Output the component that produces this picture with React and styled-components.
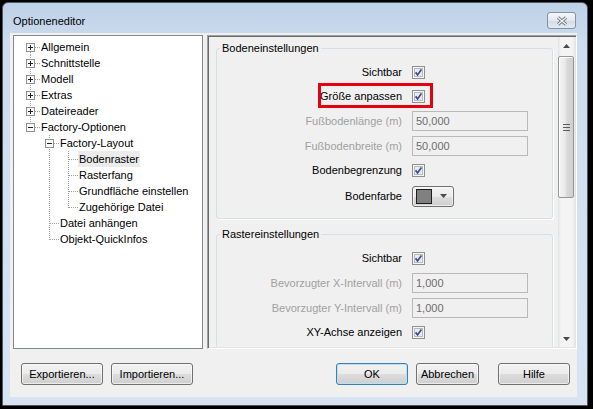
import styled, { createGlobalStyle } from "styled-components";

const GlobalStyle = createGlobalStyle`
  html, body {
    margin: 0;
    background: #000;
  }
  body {
    font-family: "Liberation Sans", Arial, sans-serif;
    font-size: 11px;
    color: #000;
  }
`;

const Screen = styled.div`
  width: 593px;
  height: 409px;
  box-sizing: border-box;
  padding: 2px 0 0 2px;
`;

const Window = styled.div`
  width: 586px;
  height: 404px;
  box-sizing: border-box;
  border: 1px solid #4b5866;
  border-radius: 6px 6px 0 0;
  background: linear-gradient(#bed1e7, #cddcee 40px, #d8e4f2);
  display: flex;
  flex-direction: column;
`;

const TitleBar = styled.div`
  height: 30px;
  flex: none;
  display: flex;
  align-items: flex-start;
  padding: 0 11px 0 10px;
`;

const Title = styled.span`
  margin-top: 11px;
  line-height: 14px;
`;

const CloseButton = styled.div`
  margin-left: auto;
  margin-top: 9px;
  width: 29px;
  height: 17px;
  box-sizing: border-box;
  border: 1px solid #8391a3;
  border-radius: 3px;
  background: linear-gradient(#f4f7fb, #e1e8f0 50%, #d3dce7 51%, #e3eaf2);
  display: flex;
  align-items: center;
  justify-content: center;
`;

const Client = styled.div`
  flex: 1;
  margin: 0 10px 8px 7px;
  background: #f0f0f0;
  display: flex;
  flex-direction: column;
  padding: 2px 0 0 3px;
`;

const Panels = styled.div`
  height: 314px;
  display: flex;
  gap: 4px;
`;

const TreeBox = styled.div`
  width: 190px;
  box-sizing: border-box;
  border: 1px solid #828790;
  background: #fff;
  padding: 3px 0 0 7px;
`;

const TreeRow = styled.div`
  display: flex;
  height: 16px;
  align-items: center;
`;

const GuideSvg = styled.svg`
  display: block;
  flex: none;
`;

const TreeLabel = styled.span`
  padding: 0 1px;
  line-height: 16px;
  white-space: nowrap;
  background: ${({ $selected }) => ($selected ? "#ebebeb" : "transparent")};
`;

const SettingsPanel = styled.div`
  flex: 1;
  display: flex;
  border: 1px solid;
  border-color: #a0a0a0 #fff #fff #a0a0a0;
  box-shadow: inset 1px 1px 0 #696969, inset -1px -1px 0 #e3e3e3;
  padding: 1px;
  min-width: 0;
`;

const SettingsContent = styled.div`
  flex: 1;
  overflow: hidden;
  padding: 4px 5px 0 7px;
  background: #f0f0f0;
`;

const Group = styled.fieldset`
  margin: ${({ $first }) => ($first ? "0" : "8px 0 0")};
  padding: 4px 0 8px 0;
  min-width: 0;
  border: 1px solid #d5dfe5;
  border-radius: 3px;
  box-shadow: 1px 1px 0 #fff;
`;

const GroupTitle = styled.legend`
  margin-left: 3px;
  padding: 0 2px;
  line-height: 15px;
`;

const Row = styled.div`
  position: relative;
  display: grid;
  grid-template-columns: 185px auto;
  column-gap: 10px;
  align-items: center;
  justify-items: start;
  height: ${({ $h }) => $h}px;
`;

const Label = styled.span`
  justify-self: end;
  white-space: nowrap;
  color: ${({ $disabled }) => ($disabled ? "#a0a0a0" : "#000")};
`;

const Highlight = styled.div`
  position: absolute;
  left: 101px;
  top: -1px;
  width: 115px;
  height: 25px;
  box-sizing: border-box;
  border: 3px solid #e4000f;
  pointer-events: none;
`;

const TextBox = styled.div`
  width: 116px;
  height: 20px;
  box-sizing: border-box;
  border: 1px solid #b9b9b9;
  background: #f0f0f0;
  color: #6d6d6d;
  padding-left: 3px;
  line-height: 18px;
`;

const ColorPicker = styled.div`
  width: 42px;
  height: 21px;
  box-sizing: border-box;
  border: 1px solid #707070;
  border-radius: 3px;
  background: linear-gradient(#f2f2f2, #ebebeb 50%, #dddddd 51%, #cfcfcf);
  box-shadow: inset 0 0 0 1px rgba(255, 255, 255, 0.6);
  display: flex;
  align-items: center;
  padding-left: 3px;
  gap: 8px;
`;

const Swatch = styled.div`
  width: 16px;
  height: 15px;
  box-sizing: border-box;
  border: 1px solid #1e1e1e;
  background: ${({ $color }) => $color};
`;

const ScrollBar = styled.div`
  width: 17px;
  flex: none;
  display: flex;
  flex-direction: column;
  background: linear-gradient(90deg, #e2e2e2, #f4f4f4 3px, #f4f4f4 14px, #e8e8e8);
`;

const ScrollArrow = styled.div`
  height: 17px;
  flex: none;
  display: flex;
  align-items: center;
  justify-content: center;
`;

const Thumb = styled.div`
  margin: 2px 1px 0 0;
  height: 142px;
  flex: none;
  box-sizing: border-box;
  border: 1px solid #979797;
  border-radius: 2px;
  background: linear-gradient(90deg, #f4f4f4, #e9e9e9 45%, #dadada 55%, #cfcfcf);
  box-shadow: inset 1px 1px 0 #fff;
  display: flex;
  align-items: center;
  justify-content: center;
`;

const ScrollSpacer = styled.div`
  flex: 1;
`;

const ButtonBar = styled.div`
  margin-top: 14px;
  display: flex;
  align-items: center;
  padding: 0 7px 0 8px;
`;

const Button = styled.div`
  width: ${({ $w }) => $w}px;
  height: 22px;
  box-sizing: border-box;
  margin-left: ${({ $ml }) => $ml || 0}px;
  border: 1px solid ${({ $default }) => ($default ? "#3c7fb1" : "#707070")};
  border-radius: 3px;
  background: linear-gradient(#f2f2f2, #ebebeb 50%, #dddddd 51%, #cfcfcf);
  box-shadow: inset 0 0 0 1px
    ${({ $default }) => ($default ? "#b9e0f5" : "rgba(255, 255, 255, 0.6)")};
  display: flex;
  align-items: center;
  justify-content: center;
  line-height: 14px;
`;

const Spacer = styled.div`
  flex: 1;
`;

function Guide({ v, h, box }) {
  return (
    <GuideSvg width="19" height="16" viewBox="0 0 19 16">
      {v && (
        <line
          x1="9.5"
          x2="9.5"
          y1={v === "bottom" ? 9 : 0}
          y2={v === "top" ? 9 : 16}
          stroke="#a0a0a0"
          strokeDasharray="1 1"
        />
      )}
      {h && (
        <line x1={box ? 14 : 10} x2="19" y1="8.5" y2="8.5" stroke="#a0a0a0" strokeDasharray="1 1" />
      )}
      {box && (
        <g>
          <rect x="5.5" y="4.5" width="8" height="8" fill="#f9f9f9" stroke="#919191" />
          <line x1="7" x2="12" y1="8.5" y2="8.5" stroke="#222" />
          {box === "plus" && <line x1="9.5" x2="9.5" y1="6" y2="11" stroke="#222" />}
        </g>
      )}
    </GuideSvg>
  );
}

function CheckBox() {
  return (
    <svg width="13" height="13" viewBox="0 0 13 13" style={{ display: "block" }}>
      <rect x="0.5" y="0.5" width="12" height="12" fill="#f6f6f6" stroke="#8e8f8f" />
      <rect x="2.5" y="2.5" width="8" height="8" fill="#e9ebee" stroke="#b5b9bf" />
      <path d="M3.6 6.4 L5.6 8.9 L9.4 3.6" fill="none" stroke="#3b4c95" strokeWidth="1.7" />
    </svg>
  );
}

function Arrow({ up }) {
  return (
    <svg width="7" height="4" viewBox="0 0 7 4">
      <path d={up ? "M0 4 L3.5 0 L7 4 Z" : "M0 0 L7 0 L3.5 4 Z"} fill="#4a4a4a" />
    </svg>
  );
}

const treeRows = [
  { label: "Allgemein", cells: [{ v: "bottom", h: true, box: "plus" }] },
  { label: "Schnittstelle", cells: [{ v: "full", h: true, box: "plus" }] },
  { label: "Modell", cells: [{ v: "full", h: true, box: "plus" }] },
  { label: "Extras", cells: [{ v: "full", h: true, box: "plus" }] },
  { label: "Dateireader", cells: [{ v: "full", h: true, box: "plus" }] },
  { label: "Factory-Optionen", cells: [{ v: "top", h: true, box: "minus" }] },
  { label: "Factory-Layout", cells: [{}, { v: "full", h: true, box: "minus" }] },
  { label: "Bodenraster", selected: true, cells: [{}, { v: "full" }, { v: "full", h: true }] },
  { label: "Rasterfang", cells: [{}, { v: "full" }, { v: "full", h: true }] },
  { label: "Grundfläche einstellen", cells: [{}, { v: "full" }, { v: "full", h: true }] },
  { label: "Zugehörige Datei", cells: [{}, { v: "full" }, { v: "top", h: true }] },
  { label: "Datei anhängen", cells: [{}, { v: "full", h: true }] },
  { label: "Objekt-QuickInfos", cells: [{}, { v: "top", h: true }] },
];

export default function App() {
  return (
    <Screen>
      <GlobalStyle />
      <Window>
        <TitleBar>
          <Title>Optioneneditor</Title>
          <CloseButton>
            <svg width="12" height="10" viewBox="0 0 12 10">
              <path d="M2 1.5 L10 8.5 M10 1.5 L2 8.5" stroke="#6c7580" strokeWidth="3" />
              <path d="M2 1.5 L10 8.5 M10 1.5 L2 8.5" stroke="#f7f7f7" strokeWidth="1.2" />
            </svg>
          </CloseButton>
        </TitleBar>
        <Client>
          <Panels>
            <TreeBox>
              {treeRows.map((row) => (
                <TreeRow key={row.label}>
                  {row.cells.map((c, i) => (
                    <Guide key={i} {...c} />
                  ))}
                  <TreeLabel $selected={row.selected}>{row.label}</TreeLabel>
                </TreeRow>
              ))}
            </TreeBox>
            <SettingsPanel>
              <SettingsContent>
                <Group $first>
                  <GroupTitle>Bodeneinstellungen</GroupTitle>
                  <Row $h={24}>
                    <Label>Sichtbar</Label>
                    <CheckBox />
                  </Row>
                  <Row $h={24}>
                    <Label>Größe anpassen</Label>
                    <CheckBox />
                    <Highlight />
                  </Row>
                  <Row $h={25}>
                    <Label $disabled>Fußbodenlänge (m)</Label>
                    <TextBox>50,000</TextBox>
                  </Row>
                  <Row $h={25}>
                    <Label $disabled>Fußbodenbreite (m)</Label>
                    <TextBox>50,000</TextBox>
                  </Row>
                  <Row $h={24}>
                    <Label>Bodenbegrenzung</Label>
                    <CheckBox />
                  </Row>
                  <Row $h={28}>
                    <Label>Bodenfarbe</Label>
                    <ColorPicker>
                      <Swatch $color="#808080" />
                      <Arrow />
                    </ColorPicker>
                  </Row>
                </Group>
                <Group>
                  <GroupTitle>Rastereinstellungen</GroupTitle>
                  <Row $h={24}>
                    <Label>Sichtbar</Label>
                    <CheckBox />
                  </Row>
                  <Row $h={25}>
                    <Label $disabled>Bevorzugter X-Intervall (m)</Label>
                    <TextBox>1,000</TextBox>
                  </Row>
                  <Row $h={25}>
                    <Label $disabled>Bevorzugter Y-Intervall (m)</Label>
                    <TextBox>1,000</TextBox>
                  </Row>
                  <Row $h={24}>
                    <Label>XY-Achse anzeigen</Label>
                    <CheckBox />
                  </Row>
                </Group>
              </SettingsContent>
              <ScrollBar>
                <ScrollArrow>
                  <Arrow up />
                </ScrollArrow>
                <Thumb>
                  <svg width="7" height="7" viewBox="0 0 7 7">
                    <path d="M0 0.5 H7 M0 3.5 H7 M0 6.5 H7" stroke="#5c5c5c" />
                  </svg>
                </Thumb>
                <ScrollSpacer />
                <ScrollArrow>
                  <Arrow />
                </ScrollArrow>
              </ScrollBar>
            </SettingsPanel>
          </Panels>
          <ButtonBar>
            <Button $w={82}>Exportieren...</Button>
            <Button $w={82} $ml={8}>Importieren...</Button>
            <Spacer />
            <Button $w={72} $default>OK</Button>
            <Button $w={63} $ml={8}>Abbrechen</Button>
            <Button $w={72} $ml={19}>Hilfe</Button>
          </ButtonBar>
        </Client>
      </Window>
    </Screen>
  );
}
